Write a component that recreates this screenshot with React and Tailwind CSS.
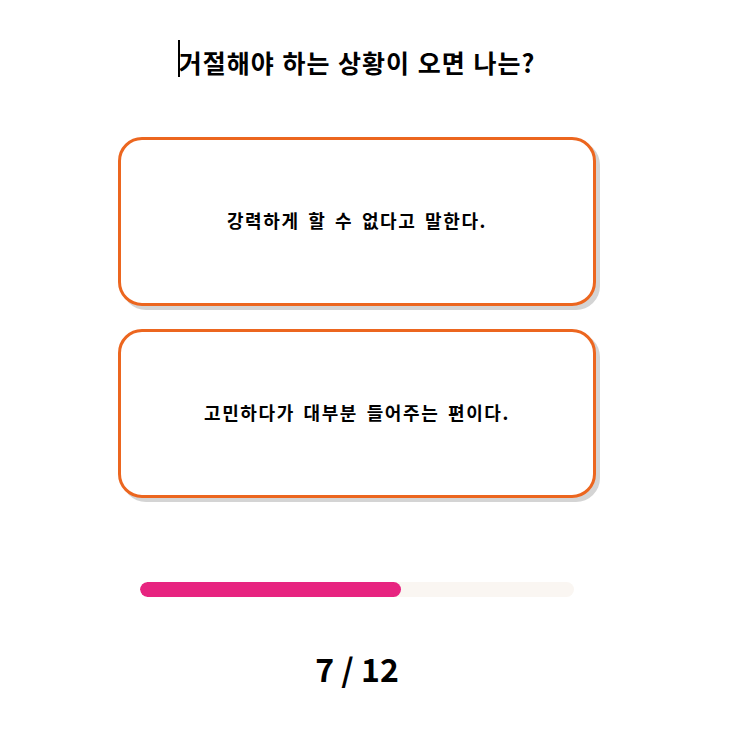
const choices = ["강력하게 할 수 없다고 말한다.", "고민하다가 대부분 들어주는 편이다."];

export default function App() {
  const current = 7;
  const total = 12;

  return (
    <div
      className="min-h-[732px] w-[740px] bg-white text-black"
      style={{ fontFamily: '"Noto Sans CJK KR", "Noto Sans", sans-serif' }}
    >
      <div className="ml-[118px] flex w-[478px] flex-col items-center pt-[40px]">
        <h1 className="relative flex h-[44px] items-center text-[25px] font-bold leading-none tracking-[1px] [word-spacing:1px]">
          <span className="absolute left-[-1px] top-0 h-[37px] w-[2px] bg-black" />
          거절해야 하는 상황이 오면 나는?
        </h1>

        <div className="mt-[53px] flex w-full flex-col gap-[23px]">
          {choices.map((text) => (
            <button
              key={text}
              className="flex h-[169px] w-full items-center justify-center rounded-[24px] border-[3px] border-[#ec661f] bg-white pb-[2px] text-[18px] font-bold tracking-[1.6px] [word-spacing:3px] shadow-[4px_4px_0_#d4d4d4]"
            >
              {text}
            </button>
          ))}
        </div>

        <div className="mt-[84px] h-[15px] w-[434px] overflow-hidden rounded-full bg-[#faf6f2]">
          <div
            className="h-full rounded-full bg-[#e72480]"
            style={{ width: `${(261 / 434) * 100}%` }}
          />
        </div>

        <div className="mt-[55px] text-[32px] font-bold leading-none">
          {current} / {total}
        </div>
      </div>
    </div>
  );
}
